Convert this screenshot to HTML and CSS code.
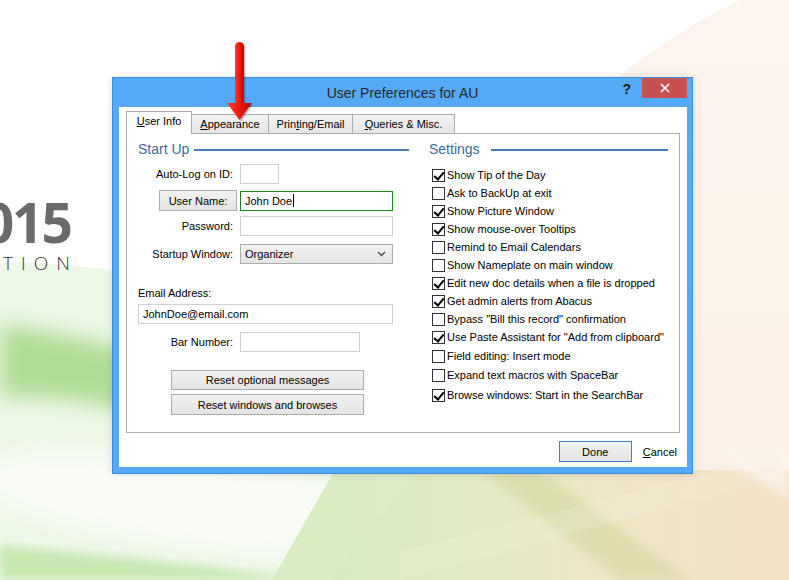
FILE: index.html
```html
<!DOCTYPE html>
<html>
<head>
<meta charset="utf-8">
<title>User Preferences for AU</title>
<link rel="stylesheet" href="styles.css">
</head>
<body>
<div class="desktop">
  <svg class="wallpaper" width="789" height="580" viewBox="0 0 789 580">
    <defs>
      <filter id="b4" x="-20%" y="-20%" width="140%" height="140%"><feGaussianBlur stdDeviation="4"/></filter>
      <filter id="b10" x="-30%" y="-30%" width="160%" height="160%"><feGaussianBlur stdDeviation="10"/></filter>
      <linearGradient id="gBottom" x1="0" y1="0" x2="1" y2="0">
        <stop offset="0" stop-color="#d3ebbd"/>
        <stop offset="0.35" stop-color="#e0ebc3"/>
        <stop offset="0.65" stop-color="#efe6c6"/>
        <stop offset="1" stop-color="#f5e1c6"/>
      </linearGradient>
      <linearGradient id="gPeach" x1="0" y1="0" x2="0" y2="1">
        <stop offset="0" stop-color="#fcf5ef"/>
        <stop offset="0.6" stop-color="#f9eee3"/>
        <stop offset="1" stop-color="#f5e4cf"/>
      </linearGradient>
    </defs>
    <rect width="789" height="580" fill="#ffffff"/>
    <circle cx="1010" cy="560" r="622" fill="url(#gPeach)"/>
    <path d="M0,262 C150,264 300,302 440,385 L440,580 L0,580 Z" fill="#eef8e9"/>
    <path d="M0,324 C50,330 100,340 150,357 L150,418 C100,402 50,396 0,398 Z" fill="#b2dd98" filter="url(#b10)"/>
    <ellipse cx="210" cy="505" rx="230" ry="42" transform="rotate(7 210 505)" fill="#f9fcf6" filter="url(#b10)"/>
    <path d="M0,545 C110,556 220,566 300,580 L0,580 Z" fill="#c8e8b2" filter="url(#b4)"/>
    <path d="M272,580 L335,470 L789,470 L789,580 Z" fill="url(#gBottom)"/>
    <path d="M480,470 L540,470 L690,580 L620,580 Z" fill="#d3d59c" opacity="0.55" filter="url(#b4)"/>
    <path d="M400,552 L789,452 L789,475 L400,580 Z" fill="#ffffff" opacity="0.12"/>
    <path d="M700,440 L789,440 L789,500 Z" fill="#fbf3ea" opacity="0.8" filter="url(#b4)"/>
    <path d="M335,470 L420,470 L330,580 L272,580 Z" fill="#dcecc6" opacity="0.6"/>
  </svg>

  <div class="brand">
    <div class="brand-year">2015</div>
    <div class="brand-sub">EDITION</div>
  </div>

  <div class="window">
    <div class="titlebar">
      <div class="title">User Preferences for AU</div>
      <div class="controls">
        <span class="help">?</span>
        <span class="close">
          <svg width="10" height="10" viewBox="0 0 10 10"><path d="M1 1 L9 9 M9 1 L1 9" stroke="#ffffff" stroke-width="1.6" fill="none"/></svg>
        </span>
      </div>
    </div>

    <div class="client">
      <div class="tabs">
        <div class="tab tab-user active"><u>U</u>ser Info</div>
        <div class="tab tab-appear"><u>A</u>ppearance</div>
        <div class="tab tab-print">Prin<u>t</u>ing/Email</div>
        <div class="tab tab-query"><u>Q</u>ueries &amp; Misc.</div>
      </div>

      <div class="pane">
        <div class="col col-left">
          <div class="sec"><span class="sec-title">Start Up</span><i class="sec-line"></i></div>

          <div class="frow">
            <span class="flabel">Auto-Log on ID:</span>
            <span class="field w-short"></span>
          </div>
          <div class="frow r-user">
            <span class="flabel flabel-btn"><span class="btn btn-user">User Name:</span></span>
            <span class="field w-full focus">John Doe<span class="caret"></span></span>
          </div>
          <div class="frow r-pass">
            <span class="flabel">Password:</span>
            <span class="field w-full"></span>
          </div>
          <div class="frow r-start">
            <span class="flabel">Startup Window:</span>
            <span class="select w-full">Organizer
              <svg width="9" height="6" viewBox="0 0 9 6"><path d="M1 1 L4.5 4.5 L8 1" stroke="#444" stroke-width="1.3" fill="none"/></svg>
            </span>
          </div>

          <div class="email-label">Email Address:</div>
          <div class="field w-email">JohnDoe@email.com</div>

          <div class="frow r-bar">
            <span class="flabel">Bar Number:</span>
            <span class="field w-bar"></span>
          </div>

          <div class="btn btn-reset r-reset1">Reset optional messages</div>
          <div class="btn btn-reset r-reset2">Reset windows and browses</div>
        </div>

        <div class="col col-right">
          <div class="sec"><span class="sec-title">Settings</span><i class="sec-line sec-line-wide"></i></div>
          <div class="checks">
            <div class="chk"><span class="box on"></span>Show Tip of the Day</div>
            <div class="chk"><span class="box"></span>Ask to BackUp at exit</div>
            <div class="chk"><span class="box on"></span>Show Picture Window</div>
            <div class="chk"><span class="box on"></span>Show mouse-over Tooltips</div>
            <div class="chk"><span class="box"></span>Remind to Email Calendars</div>
            <div class="chk"><span class="box"></span>Show Nameplate on main window</div>
            <div class="chk"><span class="box on"></span>Edit new doc details when a file is dropped</div>
            <div class="chk"><span class="box on"></span>Get admin alerts from Abacus</div>
            <div class="chk"><span class="box"></span>Bypass "Bill this record" confirmation</div>
            <div class="chk"><span class="box on"></span>Use Paste Assistant for "Add from clipboard"</div>
            <div class="chk sp1"><span class="box"></span>Field editing: Insert mode</div>
            <div class="chk sp1"><span class="box"></span>Expand text macros with SpaceBar</div>
            <div class="chk sp2"><span class="box on"></span>Browse windows: Start in the SearchBar</div>
          </div>
        </div>
      </div>

      <div class="footer">
        <span class="btn btn-done">Done</span>
        <span class="cancel"><u>C</u>ancel</span>
      </div>
    </div>
  </div>

  <svg class="arrow" width="30" height="86" viewBox="0 0 30 86">
    <defs>
      <linearGradient id="gArrow" x1="0" y1="0" x2="1" y2="0">
        <stop offset="0" stop-color="#ff3b2b"/>
        <stop offset="0.55" stop-color="#e81608"/>
        <stop offset="1" stop-color="#b80800"/>
      </linearGradient>
    </defs>
    <g opacity="0.25" transform="translate(1.5 1.5)">
      <rect x="10" y="3" width="9" height="66" rx="4.5" fill="#400"/>
      <path d="M2 64 L27 64 L14.5 81 Z" fill="#400"/>
    </g>
    <rect x="10" y="3" width="9" height="66" rx="4.5" fill="url(#gArrow)"/>
    <path d="M2 64 L27 64 L14.5 81 Z" fill="url(#gArrow)"/>
  </svg>
</div>
</body>
</html>
```

FILE: styles.css
```css
* { box-sizing: border-box; }

body {
  margin: 0;
  width: 789px;
  height: 580px;
  overflow: hidden;
  font-family: "Liberation Sans", Arial, sans-serif;
  font-size: 11px;
  color: #000;
}

.desktop {
  position: relative;
  width: 789px;
  height: 580px;
  overflow: hidden;
  background: #fff;
}

.wallpaper {
  position: absolute;
  left: 0;
  top: 0;
}

/* background logo, partly off-screen */
.brand {
  position: absolute;
  right: 716px;
  top: 194px;
  text-align: right;
  white-space: nowrap;
}
.brand-year {
  font-family: "Open Sans", "Liberation Sans", sans-serif;
  font-weight: 700;
  font-size: 55px;
  line-height: 56px;
  letter-spacing: -2px;
  color: #6a6a6a;
  margin-right: 2px;
}
.brand-sub {
  font-family: "Open Sans", "Liberation Sans", sans-serif;
  font-weight: 300;
  font-size: 19px;
  line-height: 22px;
  letter-spacing: 8px;
  margin-top: 2px;
  margin-right: -5px;
  color: #333;
}

/* window */
.window {
  position: absolute;
  left: 112px;
  top: 77px;
  width: 581px;
  height: 397px;
  border: 1px solid #3a8de0;
  background: #55aaf8;
  display: flex;
  flex-direction: column;
  box-shadow: 0 0 8px rgba(0, 0, 0, 0.12);
}

.titlebar {
  height: 29px;
  display: grid;
  grid-template-columns: 1fr auto 1fr;
  align-items: start;
}
.title {
  grid-column: 2;
  font-size: 14px;
  line-height: 29px;
  color: #262626;
  padding-top: 1px;
}
.controls {
  grid-column: 3;
  justify-self: end;
  display: flex;
  align-items: flex-start;
  margin-right: 5px;
}
.help {
  font-weight: 700;
  font-size: 14px;
  line-height: 20px;
  color: #1e1e1e;
  margin-right: 11px;
  margin-top: 1px;
}
.close {
  width: 45px;
  height: 20px;
  background: #c75050;
  display: flex;
  align-items: center;
  justify-content: center;
}

.client {
  flex: 1;
  margin: 0 5px 6px 6px;
  background: #fff;
  padding: 4px 7px 0 7px;
  display: flex;
  flex-direction: column;
}

/* tabs */
.tabs {
  height: 22px;
  display: flex;
  align-items: flex-end;
}
.tab {
  position: relative;
  height: 19px;
  border: 1px solid #acacac;
  border-bottom: none;
  background: linear-gradient(#f3f3f3, #e6e6e6);
  margin-left: -1px;
  text-align: center;
  line-height: 18px;
  white-space: nowrap;
}
.tab.active {
  z-index: 2;
  height: 23px;
  margin-left: 0;
  margin-bottom: -1px;
  background: #fff;
  line-height: 19px;
}
.tab-user { width: 66px; }
.tab-appear { width: 78px; }
.tab-print { width: 85px; }
.tab-query { width: 103px; }

.pane {
  height: 300px;
  border: 1px solid #acacac;
  padding-left: 10px;
  display: flex;
}

.col {
  display: flex;
  flex-direction: column;
}
.col-left { width: 272px; }
.col-right { width: 240px; margin-left: 19px; }

.sec {
  height: 30px;
  display: flex;
  align-items: center;
}
.sec-title {
  font-size: 14px;
  color: #3a6a9c;
  margin-left: 1px;
}
.sec-line {
  flex: 1;
  height: 2px;
  background: #4a7fb5;
  margin-left: 5px;
  margin-top: 1px;
}
.sec-line-wide { margin-left: 11px; }

/* form rows */
.frow {
  display: flex;
  align-items: center;
}
.flabel {
  width: 96px;
  margin-right: 7px;
  text-align: right;
  white-space: nowrap;
}
.flabel-btn {
  display: flex;
  justify-content: flex-end;
  margin-right: 3px;
  width: 100px;
}
.r-user { margin-top: 6px; }
.r-pass { margin-top: 5px; }
.r-start { margin-top: 8px; }
.r-bar { margin-top: 8px; }

.field {
  height: 20px;
  border: 1px solid #cfcfcf;
  background: #fff;
  display: flex;
  align-items: center;
  padding-left: 4px;
  white-space: nowrap;
}
.field.focus { border-color: #1d8a1d; }
.caret {
  display: inline-block;
  width: 1px;
  height: 13px;
  background: #000;
  margin-left: 1px;
}
.w-short { width: 39px; }
.w-full { width: 153px; }
.w-bar { width: 120px; }
.w-email {
  width: 255px;
  margin-left: 1px;
  margin-top: 4px;
}

.select {
  height: 20px;
  border: 1px solid #acacac;
  background: linear-gradient(#f2f2f2, #e5e5e5);
  display: flex;
  align-items: center;
  justify-content: space-between;
  padding: 0 6px 0 4px;
}

.email-label {
  margin-top: 22px;
  margin-left: 1px;
  line-height: 14px;
}

.btn {
  border: 1px solid #acacac;
  background: linear-gradient(#f2f2f2, #e4e4e4);
  display: flex;
  align-items: center;
  justify-content: center;
  white-space: nowrap;
}
.btn-user {
  width: 78px;
  height: 21px;
}
.btn-reset {
  width: 193px;
  height: 20px;
  margin-left: 34px;
}
.r-reset1 { margin-top: 18px; }
.r-reset2 { margin-top: 4px; height: 21px; }

/* checkboxes */
.checks {
  margin-top: 2px;
  padding-left: 4px;
  display: flex;
  flex-direction: column;
}
.chk {
  height: 18px;
  display: flex;
  align-items: center;
  white-space: nowrap;
}
.chk.sp1 { margin-top: 1px; }
.chk.sp2 { margin-top: 2px; }
.box {
  position: relative;
  width: 13px;
  height: 13px;
  border: 1px solid #333;
  background: #fff;
  margin-right: 2px;
  flex: none;
}
.box.on::after {
  content: "";
  position: absolute;
  left: 3px;
  top: 0px;
  width: 4px;
  height: 8px;
  border-right: 2px solid #000;
  border-bottom: 2px solid #000;
  transform: rotate(40deg);
}

/* footer */
.footer {
  display: flex;
  align-items: center;
  justify-content: flex-end;
  padding-top: 8px;
  padding-right: 3px;
}
.btn-done {
  width: 73px;
  height: 21px;
  border-color: #3c7fd6;
}
.cancel {
  margin-left: 11px;
}

.arrow {
  position: absolute;
  left: 225px;
  top: 39px;
}
```
